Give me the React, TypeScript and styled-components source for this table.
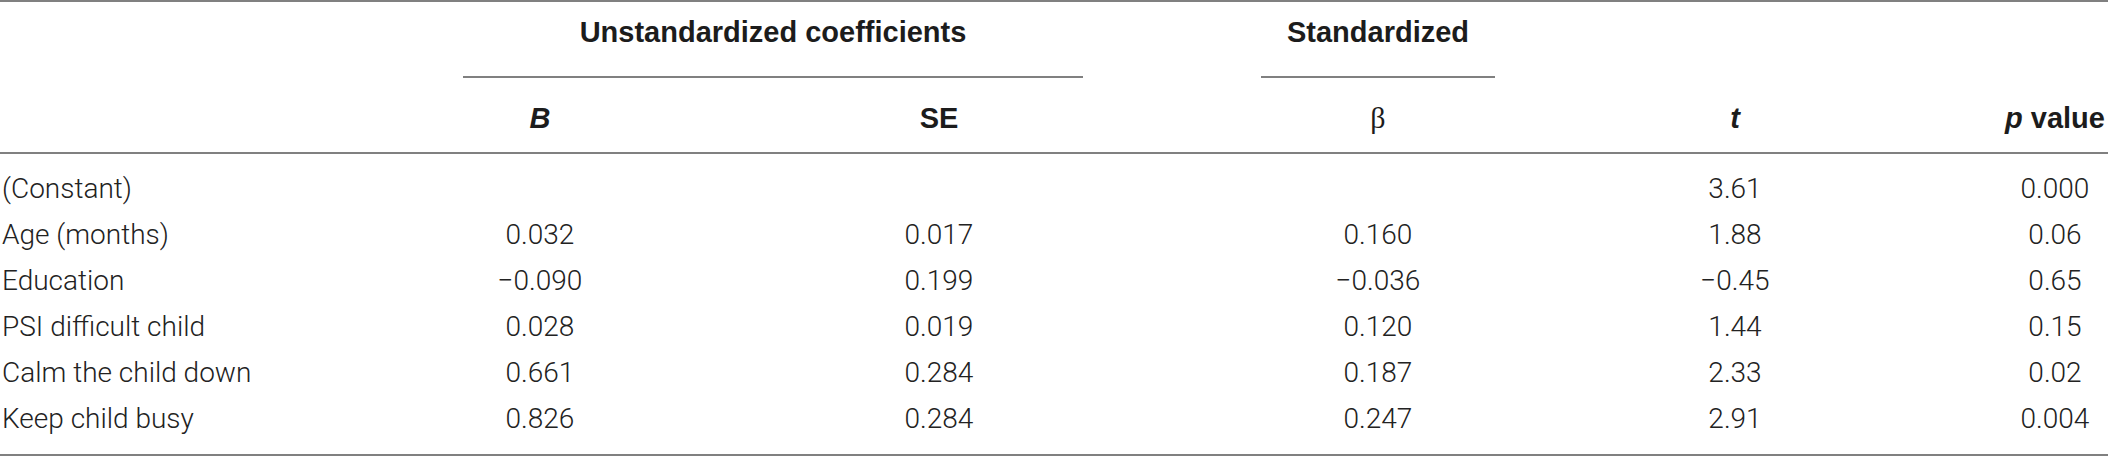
import React from "react";
import styled, { createGlobalStyle } from "styled-components";

const GlobalStyle = createGlobalStyle`
  html, body { margin: 0; padding: 0; background: #ffffff; }
  body { width: 2108px; }
`;

const RULE = "#808080";

const Table = styled.table`
  width: 2108px;
  border-collapse: separate;
  border-spacing: 0;
  table-layout: fixed;
  font-family: Roboto, "Liberation Sans", Arial, sans-serif;
  color: #222222;
`;

const HeadCell = styled.th<{ $top?: boolean; $inset?: boolean; $padLeft?: number }>`
  padding: ${(p) => (p.$top ? "15px" : "25px")} ${(p) => (p.$inset ? "89px" : "0")} ${(p) => (p.$top ? "0" : "19px")}
    ${(p) => (p.$inset ? "89px" : `${p.$padLeft ?? 0}px`)};
  border-top: ${(p) => (p.$top ? `2px solid ${RULE}` : "none")};
  border-bottom: ${(p) => (p.$top ? "none" : `2px solid ${RULE}`)};
  font-family: "Liberation Sans", Arial, sans-serif;
  font-weight: 700;
  font-size: 29px;
  line-height: 30px;
  color: #1c1c1c;
  text-align: center;
  vertical-align: top;
  white-space: nowrap;
`;

const GroupLabel = styled.div`
  padding-bottom: 29px;
  border-bottom: 2px solid ${RULE};
`;

const Ital = styled.i`
  font-style: italic;
`;

const Beta = styled.span`
  font-family: "Liberation Serif", "DejaVu Serif", serif;
  font-weight: 400;
  font-size: 30px;
`;

const Cell = styled.td<{ $first?: boolean; $last?: boolean; $label?: boolean; $padLeft?: number }>`
  padding: ${(p) => (p.$first ? "20px" : "8px")} 0 ${(p) => (p.$last ? "20px" : "8px")}
    ${(p) => (p.$label ? 2 : p.$padLeft ?? 0)}px;
  border-bottom: ${(p) => (p.$last ? `2px solid ${RULE}` : "none")};
  font-size: 28px;
  font-weight: 300;
  line-height: 30px;
  text-align: ${(p) => (p.$label ? "left" : "center")};
  white-space: nowrap;
`;

const widths = [374, 332, 466, 412, 302, 222];
const P_PAD = 116;

type Row = [string, string, string, string, string, string];

const rows: Row[] = [
  ["(Constant)", "", "", "", "3.61", "0.000"],
  ["Age (months)", "0.032", "0.017", "0.160", "1.88", "0.06"],
  ["Education", "\u22120.090", "0.199", "\u22120.036", "\u22120.45", "0.65"],
  ["PSI difficult child", "0.028", "0.019", "0.120", "1.44", "0.15"],
  ["Calm the child down", "0.661", "0.284", "0.187", "2.33", "0.02"],
  ["Keep child busy", "0.826", "0.284", "0.247", "2.91", "0.004"],
];

export default function App() {
  return (
    <>
      <GlobalStyle />
      <Table>
        <colgroup>
          {widths.map((w, i) => (
            <col key={i} style={{ width: w }} />
          ))}
        </colgroup>
        <thead>
          <tr>
            <HeadCell $top />
            <HeadCell $top $inset colSpan={2}>
              <GroupLabel>Unstandardized coefficients</GroupLabel>
            </HeadCell>
            <HeadCell $top $inset>
              <GroupLabel>Standardized</GroupLabel>
            </HeadCell>
            <HeadCell $top />
            <HeadCell $top />
          </tr>
          <tr>
            <HeadCell />
            <HeadCell>
              <Ital>B</Ital>
            </HeadCell>
            <HeadCell>SE</HeadCell>
            <HeadCell>
              <Beta>β</Beta>
            </HeadCell>
            <HeadCell>
              <Ital>t</Ital>
            </HeadCell>
            <HeadCell $padLeft={P_PAD}>
              <Ital>p</Ital> value
            </HeadCell>
          </tr>
        </thead>
        <tbody>
          {rows.map((r, ri) => (
            <tr key={ri}>
              {r.map((v, ci) => (
                <Cell
                  key={ci}
                  $first={ri === 0}
                  $last={ri === rows.length - 1}
                  $label={ci === 0}
                  $padLeft={ci === 5 ? P_PAD : 0}
                >
                  {v}
                </Cell>
              ))}
            </tr>
          ))}
        </tbody>
      </Table>
    </>
  );
}
